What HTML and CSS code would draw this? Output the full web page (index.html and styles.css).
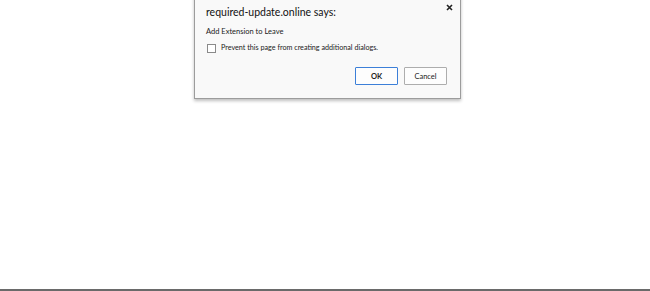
FILE: index.html
```html
<!DOCTYPE html>
<html>
<head>
<meta charset="utf-8">
<link rel="stylesheet" href="styles.css">
</head>
<body>
<div class="page">
  <div class="dialog">
    <button class="close" aria-label="Close">
      <svg width="7" height="7" viewBox="0 0 7 7"><path d="M1 1L6 6M6 1L1 6" stroke="#222" stroke-width="1.6"/></svg>
    </button>
    <div class="title">required-update.online says:</div>
    <div class="message">Add Extension to Leave</div>
    <label class="check"><span class="box"></span><span>Prevent this page from creating additional dialogs.</span></label>
    <div class="buttons">
      <button class="btn ok">OK</button>
      <button class="btn">Cancel</button>
    </div>
  </div>
</div>
</body>
</html>
```
FILE: styles.css
```css
html, body {
  margin: 0;
  padding: 0;
  background: #ffffff;
}
.page {
  height: 289px;
  border-bottom: 2px solid #6a6a6a;
  display: flex;
  flex-direction: column;
  align-items: flex-start;
}
.dialog {
  position: relative;
  margin-left: 194px;
  margin-top: -6px;
  width: 267px;
  height: 105px;
  background: #f9f9f9;
  border: 1px solid #9c9c9c;
  box-shadow: 0 2px 3px rgba(0,0,0,0.25);
  box-sizing: border-box;
  padding: 9px 0 0 11px;
  font-family: "Lato", "Liberation Sans", sans-serif;
  color: #222;
}
.close {
  position: absolute;
  right: 7px;
  top: 9px;
  border: 0;
  background: none;
  padding: 0;
  width: 7px;
  height: 7px;
  display: block;
}
.close svg { display: block; }
.title {
  font-size: 10.5px;
  line-height: 16px;
  color: #111;
}
.message {
  margin-top: 6px;
  font-size: 7.5px;
  line-height: 12px;
}
.check {
  margin-top: 4px;
  display: flex;
  align-items: center;
  gap: 5px;
  font-size: 7.2px;
  line-height: 12px;
}
.box {
  width: 7px;
  height: 7px;
  border: 1px solid #8a8a8a;
  background: #fff;
  margin-left: 1px;
}
.buttons {
  display: flex;
  justify-content: flex-end;
  gap: 6px;
  margin-top: 13px;
  margin-right: 13px;
}
.btn {
  width: 43px;
  height: 18px;
  padding: 0;
  font-family: "Lato", "Liberation Sans", sans-serif;
  font-size: 7.5px;
  color: #222;
  background: #fdfdfd;
  border: 1px solid #adadad;
  border-radius: 1px;
}
.btn.ok {
  border-color: #3c7fd8;
  font-weight: bold;
}
```
